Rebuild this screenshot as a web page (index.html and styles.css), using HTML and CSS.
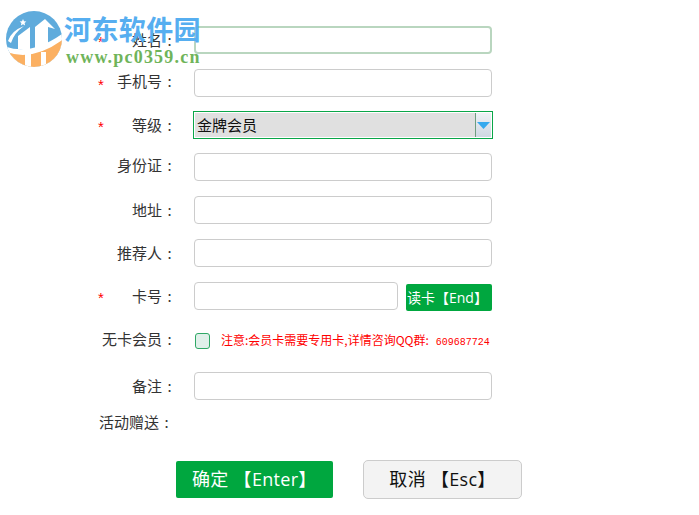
FILE: index.html
```html
<!DOCTYPE html>
<html lang="zh-CN">
<head>
<meta charset="utf-8">
<title>会员</title>
<link rel="stylesheet" href="styles.css">
</head>
<body>
<div class="logo">
  <svg class="logo-icon" width="70" height="70" viewBox="0 0 70 70">
    <defs><clipPath id="disc"><circle cx="34" cy="39" r="28"/></clipPath></defs>
    <g clip-path="url(#disc)">
      <rect class="lb" x="0" y="0" width="70" height="70"/>
      <path class="lw" d="M0 44Q30 60 70 28V70H0Z"/>
      <path class="lo" d="M0 49Q32 66 70 34V70H0Z"/>
      <path class="lw" d="M25 54H31V70H25ZM41 52H46V70H41Z"/>
    </g>
    <path class="lw" d="M18 49V36L30 27V51Z"/>
    <path class="lw" d="M35 52V27L45 19L55 29L48 27V46Z"/>
    <path class="lw" d="M8 41Q11 31 24 26Q14 33 11 43Z"/>
    <path class="lw" d="M23 19l1 2.200 2.400.3-1.800 1.600.5 2.400-2.100-1.200-2.100 1.200.5-2.400-1.800-1.600 2.400-.3z"/>
  </svg>
  <div class="logo-name">河东软件园</div>
  <div class="logo-url">www.pc0359.cn</div>
</div>
<form class="form">
  <div class="row r-name"><i class="star">*</i><label class="lab">姓名<b>:</b></label><div class="field focus"></div></div>
  <div class="row r-phone"><i class="star">*</i><label class="lab up2">手机号<b>:</b></label><div class="field"></div></div>
  <div class="row r-level"><i class="star">*</i><label class="lab">等级<b>:</b></label>
    <div class="select"><span class="select-val">金牌会员</span><span class="select-btn"><svg width="13" height="7" viewBox="0 0 13 7"><path d="M0 0H13L6.500 7Z"/></svg></span></div>
  </div>
  <div class="row r-id"><i class="star"></i><label class="lab up1">身份证<b>:</b></label><div class="field"></div></div>
  <div class="row r-addr"><i class="star"></i><label class="lab">地址<b>:</b></label><div class="field"></div></div>
  <div class="row r-ref"><i class="star"></i><label class="lab">推荐人<b>:</b></label><div class="field"></div></div>
  <div class="row r-card"><i class="star">*</i><label class="lab">卡号<b>:</b></label><div class="field short"></div><button type="button" class="btn-read">读卡【End】</button></div>
  <div class="row r-nocard"><i class="star"></i><label class="lab up1">无卡会员<b>:</b></label><span class="check"></span><span class="note">注意:会员卡需要专用卡,详情咨询QQ群:<span class="qq">609687724</span></span></div>
  <div class="row r-memo"><i class="star"></i><label class="lab">备注<b>:</b></label><div class="field"></div></div>
  <div class="row r-gift"><label class="gift">活动赠送<b>:</b></label></div>
  <div class="actions">
    <button type="button" class="btn ok">确定 【Enter】</button>
    <button type="button" class="btn cancel">取消 【Esc】</button>
  </div>
</form>
</body>
</html>
```
FILE: styles.css
```css
* { box-sizing: border-box; }
html, body { margin: 0; padding: 0; background: #fff; }
body { width: 699px; height: 515px; overflow: hidden; font-family: "Open Sans", "Noto Sans CJK SC", sans-serif; color: #333; position: relative; }

.logo { position: absolute; left: 0; top: 0; width: 210px; height: 72px; z-index: 2; pointer-events: none; }
.logo-icon { position: absolute; left: 0; top: 0; }
.lb { fill: #5fabdc; }
.lo { fill: #fbb062; }
.lw { fill: #fff; }
.logo-name { position: absolute; left: 64px; top: 12px; font: bold 27px/34px "Noto Sans CJK SC", sans-serif; letter-spacing: .4px; color: #56aef0; white-space: nowrap; }
.logo-url { position: absolute; left: 66px; top: 47px; font: bold 18px/20px "Liberation Serif", serif; letter-spacing: 1.2px; color: #6fb45a; white-space: nowrap; }

.form { padding: 26px 0 0 98px; }
.row { display: flex; align-items: center; height: 28px; }
.r-phone { margin-top: 15px; }
.r-level, .r-id { margin-top: 14px; }
.r-addr, .r-ref, .r-card { margin-top: 15px; }
.r-nocard { margin-top: 23px; height: 16px; }
.r-memo { margin-top: 23px; }
.r-gift { margin-top: 8px; height: 28px; }

.star { width: 8px; height: 28px; font: normal 15px/31px "Liberation Sans", sans-serif; color: #f00; }
.lab { width: 71px; margin-right: 17px; flex: none; display: flex; justify-content: flex-end; font-size: 15px; line-height: 22px; font-family: "Noto Sans CJK SC", sans-serif; white-space: nowrap; }
.lab.up2 { margin-top: -5px; }
.lab.up1 { margin-top: -4px; }
.lab b, .gift b { display: inline-block; flex: none; width: 15px; text-align: center; font-weight: 400; }
.gift { font-size: 15px; line-height: 22px; margin-left: 1px; font-family: "Noto Sans CJK SC", sans-serif; white-space: nowrap; }

.field { width: 298px; height: 28px; border: 1px solid #ccc; border-radius: 4px; background: #fff; }
.field.focus { border: 2px solid #b9d6bf; }
.field.short { width: 204px; }

.select { width: 300px; height: 28px; margin-left: -1px; display: flex; border: 1px solid #0aa648; padding: 1px; background: #fff; }
.select-val { flex: 1; background: #e0e0e0; font: 15px/24px "Noto Sans CJK SC", sans-serif; color: #111; padding-left: 2px; }
.select-btn { width: 16px; display: flex; align-items: center; justify-content: center; border-left: 1px solid #6f9d80; background: linear-gradient(#eef1f5, #cfd8e2); }
.select-btn svg { fill: #35a9ee; }

.btn-read { margin-left: 8px; width: 86px; height: 27px; margin-top: 2px; padding: 0 0 0 1px; border: 0; border-radius: 2px; background: #00a73f; color: #fff; font: 14px/27px "Open Sans", "Noto Sans CJK SC", sans-serif; text-align: left; white-space: nowrap; }

.check { width: 15px; height: 16px; margin-left: 1px; border: 1.500px solid #2fa866; border-radius: 3px; background: #e0f0ea; flex: none; }
.note { margin-left: 11px; font: 12px/16px "Noto Sans CJK SC", sans-serif; color: #f00; white-space: nowrap; }
.qq { margin-left: 7px; font: 10px/16px "Liberation Mono", monospace; }

.actions { display: flex; align-items: center; margin-top: 24px; margin-left: 78px; }
.btn { height: 37px; font: 18px/37px "Open Sans", "Noto Sans CJK SC", sans-serif; letter-spacing: .3px; white-space: nowrap; padding: 0; }
.ok { width: 157px; border: 0; border-radius: 2px; background: #00a73f; color: #fff; text-align: left; padding-left: 16px; }
.cancel { width: 159px; height: 39px; margin-left: 30px; border: 1px solid #ccc; border-radius: 5px; background: #f3f3f3; color: #111; }
```
